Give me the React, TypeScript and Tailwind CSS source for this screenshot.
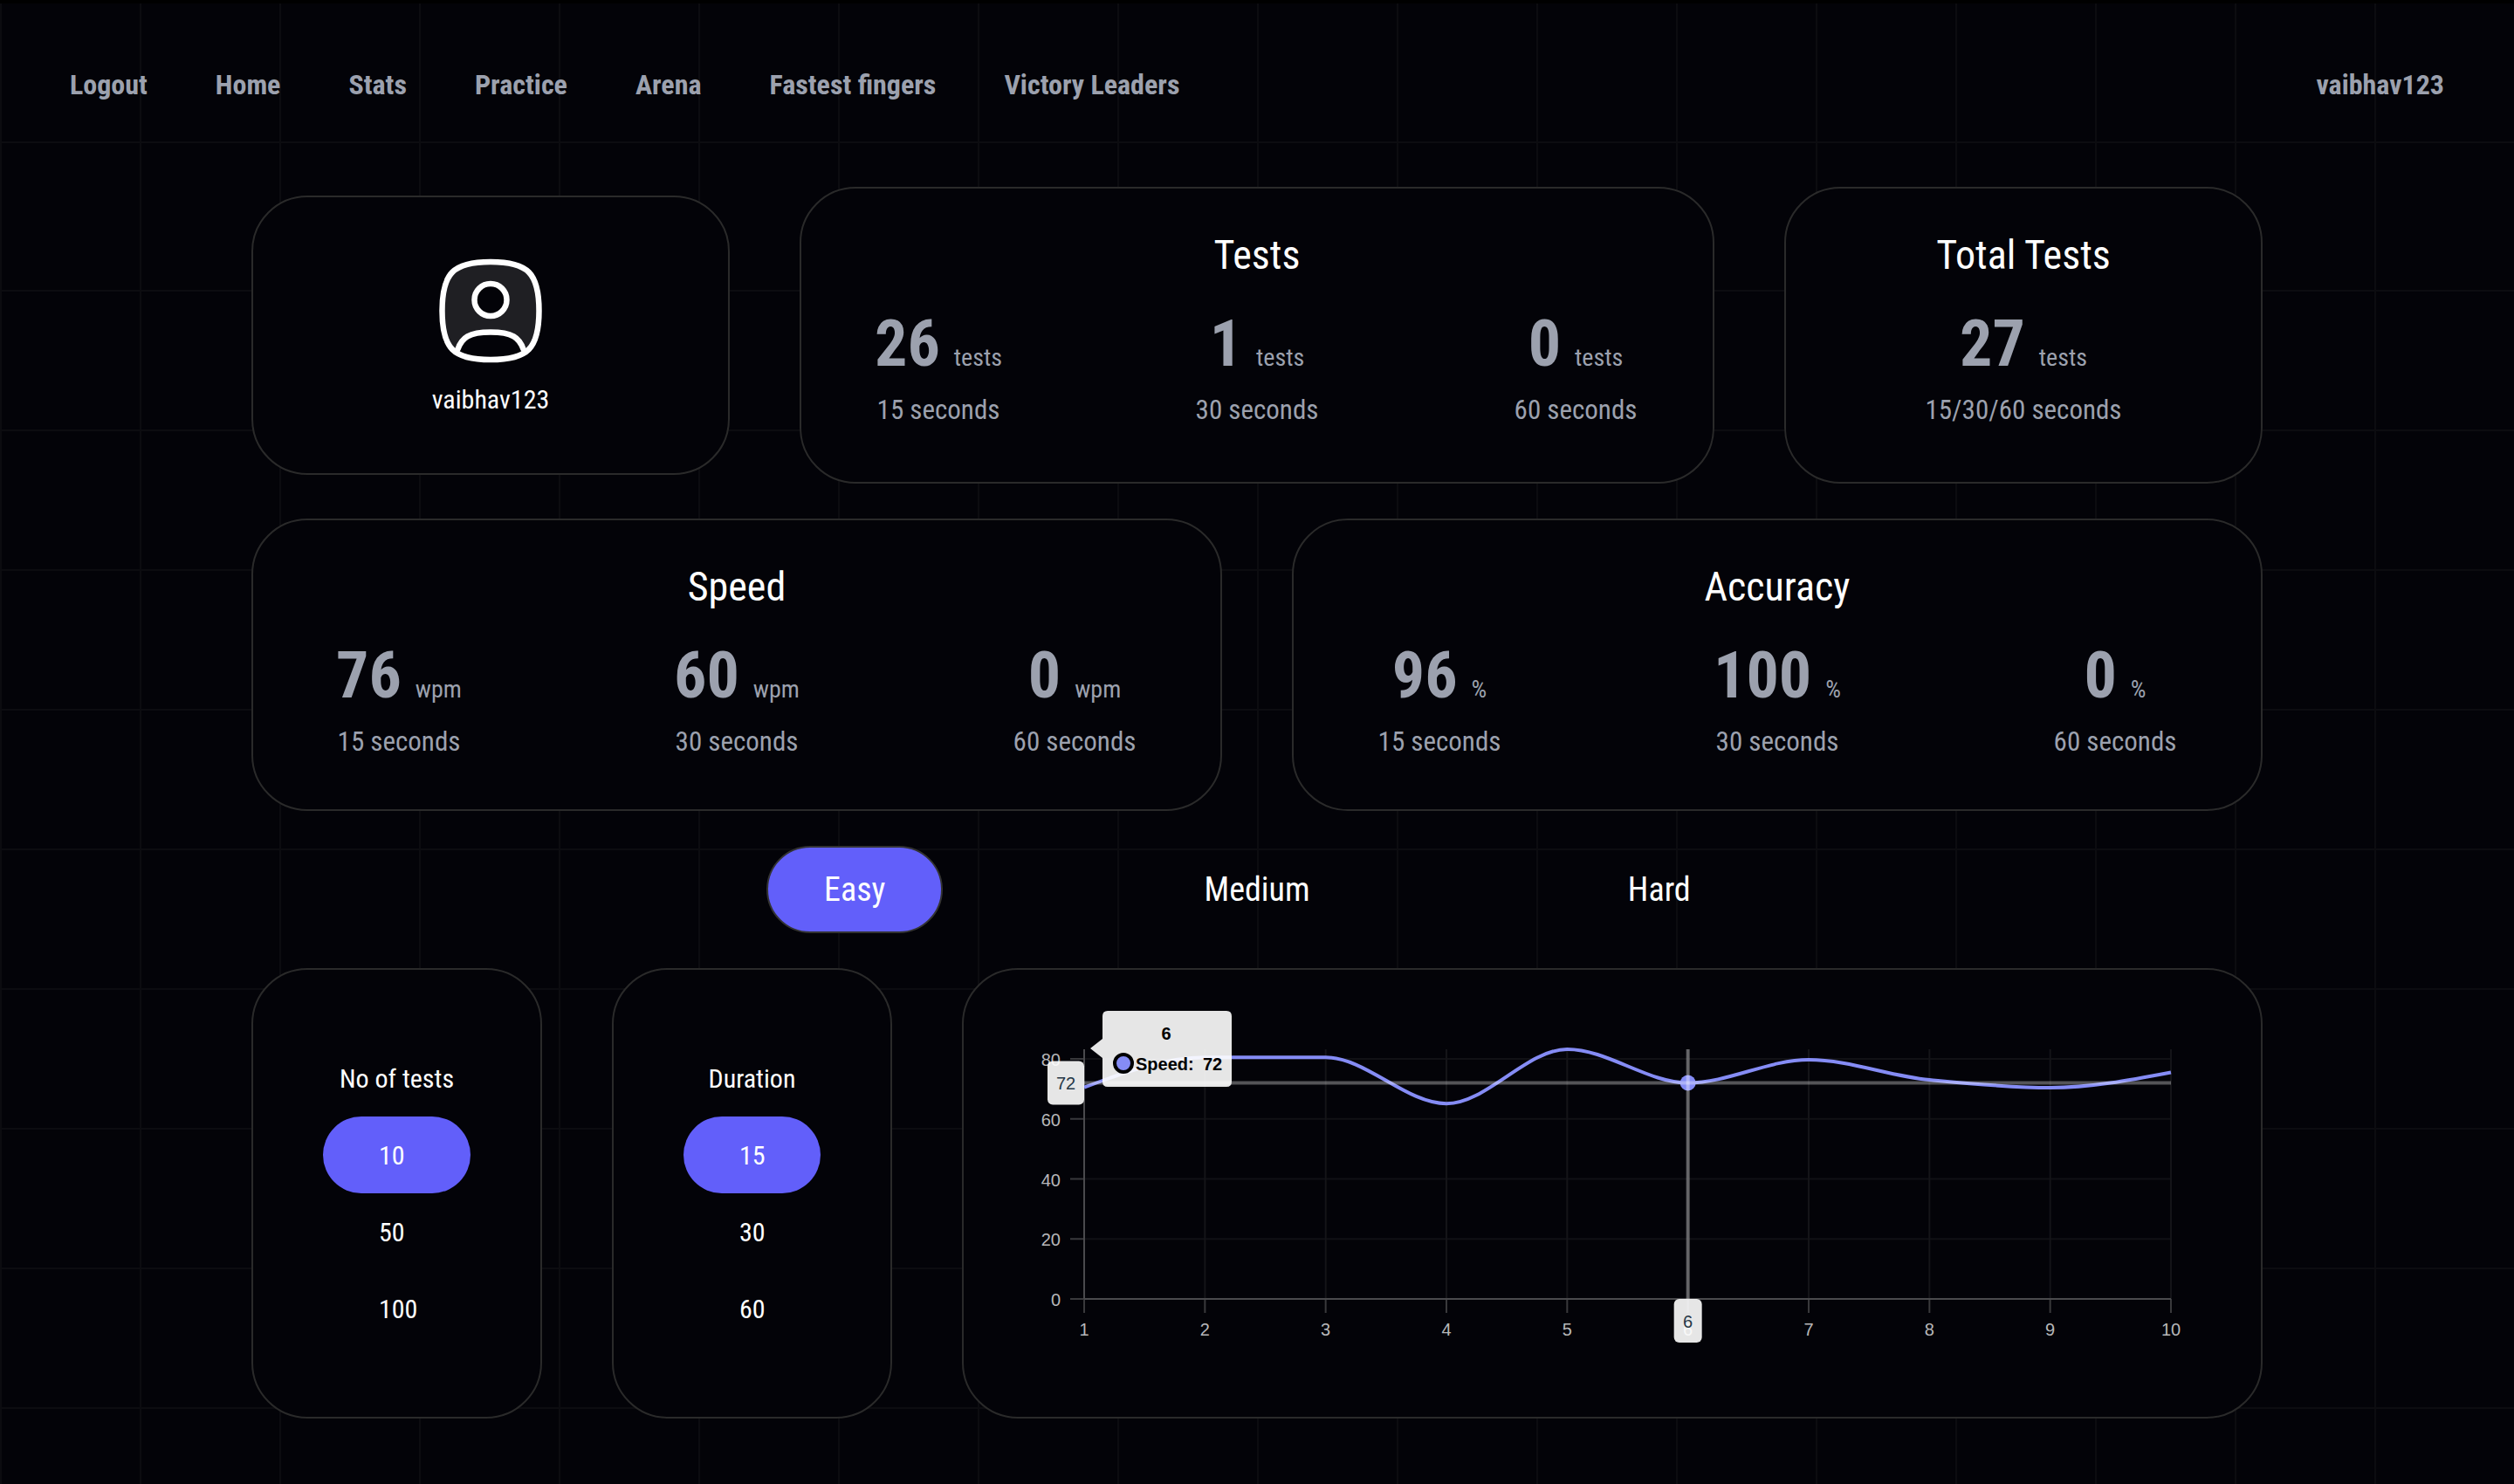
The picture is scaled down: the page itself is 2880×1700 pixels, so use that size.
import React, { useState } from "react";

const NAV = ["Logout", "Home", "Stats", "Practice", "Arena", "Fastest fingers", "Victory Leaders"];

type Stat = { value: string; unit: string; label: string };

const TESTS: Stat[] = [
  { value: "26", unit: "tests", label: "15 seconds" },
  { value: "1", unit: "tests", label: "30 seconds" },
  { value: "0", unit: "tests", label: "60 seconds" },
];
const SPEED: Stat[] = [
  { value: "76", unit: "wpm", label: "15 seconds" },
  { value: "60", unit: "wpm", label: "30 seconds" },
  { value: "0", unit: "wpm", label: "60 seconds" },
];
const ACCURACY: Stat[] = [
  { value: "96", unit: "%", label: "15 seconds" },
  { value: "100", unit: "%", label: "30 seconds" },
  { value: "0", unit: "%", label: "60 seconds" },
];

const CARD = "rounded-[64px] border-2 border-[#2a2a2a] bg-[#030308]";

function StatCell({ stat }: { stat: Stat }) {
  return (
    <div className="flex min-w-[154px] flex-col items-center whitespace-nowrap text-[#9ca1ae]">
      <div className="flex items-baseline gap-4 leading-[80px]">
        <span className="text-[74px] font-bold">{stat.value}</span>
        <span className="text-[28px]">{stat.unit}</span>
      </div>
      <div className="text-[31px] leading-[40px]">{stat.label}</div>
    </div>
  );
}

function StatCard({ title, stats, className }: { title: string; stats: Stat[]; className: string }) {
  return (
    <section className={`${CARD} pt-10 ${className}`}>
      <h2 className="text-center text-[46px] leading-[72px] text-white">{title}</h2>
      <div className={`mt-[26px] flex ${stats.length > 1 ? "justify-between" : "justify-center"}`}>
        {stats.map((s) => (
          <StatCell key={s.label} stat={s} />
        ))}
      </div>
    </section>
  );
}

function Avatar() {
  return (
    <svg viewBox="0 0 124 124" className="h-[124px] w-[124px]" fill="none" stroke="#fff" strokeWidth="6.5" strokeLinecap="round" aria-hidden="true">
      <path d="M6.5 62C6.5 19 19 6 62 6S117.500 19 117.500 62S105 118 62 118S6.500 105 6.500 62Z" fill="#1f1f23" stroke="none" />
      <path d="M24.500 106C29 93 37 86.500 62 86.500S95 93 99.500 106C90 115 80 117 62 117S34 115 24.500 106Z" fill="#030308" stroke="none" />
      <path d="M6.500 62C6.500 19 19 6 62 6S117.500 19 117.500 62S105 118 62 118S6.500 105 6.500 62Z" />
      <circle cx="62" cy="49.500" r="18.500" fill="#030308" />
      <path d="M24.500 106C29 93 37 86.500 62 86.500S95 93 99.500 106" />
    </svg>
  );
}

function OptionCard({ title, options, className }: { title: string; options: string[]; className: string }) {
  const [active, setActive] = useState(options[0]);
  return (
    <section className={`${CARD} flex flex-col p-20 text-[30px] text-white ${className}`}>
      <h3 className="flex h-[88px] items-center justify-center whitespace-nowrap">{title}</h3>
      {options.map((o) => (
        <button
          key={o}
          type="button"
          aria-pressed={o === active}
          onClick={() => setActive(o)}
          className={`flex h-[88px] items-center rounded-full px-16 ${o === active ? "bg-[#625ffa]" : ""}`}
        >
          {o}
        </button>
      ))}
    </section>
  );
}

const SPEEDS = [70.5, 80.5, 80.5, 65.1, 83.2, 72, 79.7, 73, 70.4, 75.5];
const LEFT = 138;
const RIGHT = 1383;
const TOP = 91;
const BOTTOM = 377;
const STEP = (RIGHT - LEFT) / 9;
const px = (i: number) => LEFT + STEP * i;
const py = (v: number) => BOTTOM - v * 3.4375;

/* Monotone cubic interpolation through the points */
function smoothPath(values: number[]) {
  const ys = values.map(py);
  const n = ys.length;
  const slope = ys.slice(1).map((y, i) => (y - ys[i]) / STEP);
  const tangent = ys.map((_, i) => {
    if (i === 0 || i === n - 1) return 0;
    const a = slope[i - 1];
    const b = slope[i];
    return a * b <= 0 ? 0 : (2 * a * b) / (a + b);
  });
  tangent[0] = (3 * slope[0] - tangent[1]) / 2;
  tangent[n - 1] = (3 * slope[n - 2] - tangent[n - 2]) / 2;
  let d = `M${px(0)} ${ys[0]}`;
  for (let i = 0; i < n - 1; i++) {
    const h = STEP / 3;
    d += `C${px(i) + h} ${ys[i] + tangent[i] * h} ${px(i + 1) - h} ${ys[i + 1] - tangent[i + 1] * h} ${px(i + 1)} ${ys[i + 1]}`;
  }
  return d;
}

function SpeedChart() {
  const hover = 5;
  const hx = px(hover);
  const hy = py(SPEEDS[hover]);
  return (
    <svg viewBox="0 0 1486 512" className="block w-full font-['Liberation_Sans',Arial,sans-serif] text-[20px]" role="img" aria-label="Speed per test">
      {[20, 40, 60, 80].map((v) => (
        <line key={v} x1={LEFT} x2={RIGHT} y1={py(v)} y2={py(v)} stroke="#111115" strokeWidth="2" />
      ))}
      {SPEEDS.map((_, i) => (
        <line key={i} x1={px(i)} x2={px(i)} y1={TOP} y2={BOTTOM} stroke="#141418" strokeWidth="2" />
      ))}
      {[0, 20, 40, 60, 80].map((v) => (
        <g key={v}>
          <line x1={LEFT - 16} x2={LEFT} y1={py(v)} y2={py(v)} stroke="#39393c" strokeWidth="2" />
          <text x="111" y={py(v) + 8} textAnchor="end" fill="#b7b7b9">{v}</text>
        </g>
      ))}
      {SPEEDS.map((_, i) => (
        <g key={i}>
          <line x1={px(i)} x2={px(i)} y1={BOTTOM} y2={BOTTOM + 16} stroke="#39393c" strokeWidth="2" />
          <text x={px(i)} y="419" textAnchor="middle" fill="#b7b7b9">{i + 1}</text>
        </g>
      ))}
      <line x1={LEFT} x2={LEFT} y1={TOP} y2={BOTTOM} stroke="#4a4a4d" strokeWidth="2" />
      <line x1={LEFT} x2={RIGHT} y1={BOTTOM} y2={BOTTOM} stroke="#4a4a4d" strokeWidth="2" />

      <path d={smoothPath(SPEEDS)} fill="none" stroke="#858cf5" strokeWidth="4" />
      <circle cx={hx} cy={hy} r="9" fill="#858cf5" />
      <line x1={LEFT} x2={RIGHT} y1={hy} y2={hy} stroke="#fff" strokeOpacity="0.32" strokeWidth="4" />
      <line x1={hx} x2={hx} y1={TOP} y2={BOTTOM} stroke="#fff" strokeOpacity="0.36" strokeWidth="4" />

      <rect x={LEFT - 42} y={hy - 25} width="42" height="50" rx="6" fill="#fff" fillOpacity="0.9" />
      <text x={LEFT - 21} y={hy + 7} textAnchor="middle" fill="#263846">72</text>
      <rect x={hx - 16} y={BOTTOM} width="32" height="50" rx="6" fill="#fff" fillOpacity="0.9" />
      <text x={hx} y="410" textAnchor="middle" fill="#263846">6</text>

      <path d="M165 47H301Q307 47 307 53V128Q307 134 301 134H165Q159 134 159 128V101L145 90L159 79V53Q159 47 165 47Z" fill="#fff" fillOpacity="0.9" />
      <g fill="#000" className="font-bold">
        <text x="232" y="80" textAnchor="middle">6</text>
        <text x="197" y="115">Speed:</text>
        <text x="274" y="115">72</text>
      </g>
      <circle cx="183" cy="107" r="10" fill="#858cf5" stroke="#000" strokeWidth="4" />
    </svg>
  );
}

export default function App() {
  const [level, setLevel] = useState("Easy");
  return (
    <div className="flex min-h-screen flex-col border-t-4 border-black bg-[#030308] bg-[linear-gradient(to_right,#0c0c10_2px,transparent_2px)] bg-[length:160px_100%] font-['Roboto_Condensed',Roboto,sans-serif]">
      <header className="mb-[10px] flex h-40 items-center justify-between border-b-2 border-[#0c0c10] px-20 pt-7 text-[32px] font-bold text-[#9ca1ae]">
        <nav className="flex gap-[78px]">
          {NAV.map((n) => (
            <a key={n} href="#">{n}</a>
          ))}
        </nav>
        <a href="#">vaibhav123</a>
      </header>

      <main className="flex-1 bg-[linear-gradient(to_bottom,transparent_158px,#0c0c10_158px)] bg-[length:100%_160px] pb-[75px] pt-10">
        <div className="mx-auto flex w-4/5 flex-col gap-10">
          <div className="grid grid-cols-[137fr_262fr_137fr] items-center gap-20">
            <section className={`${CARD} flex h-80 flex-col items-center pt-[68px]`}>
              <Avatar />
              <p className="mt-4 text-[30px] leading-[48px] text-white">vaibhav123</p>
            </section>
            <StatCard title="Tests" stats={TESTS} className="h-[340px] px-20" />
            <StatCard title="Total Tests" stats={[{ value: "27", unit: "tests", label: "15/30/60 seconds" }]} className="h-[340px] px-20" />
          </div>

          <div className="grid grid-cols-2 gap-20">
            <StatCard title="Speed" stats={SPEED} className="h-[335px] px-[90px]" />
            <StatCard title="Accuracy" stats={ACCURACY} className="h-[335px] px-[90px]" />
          </div>

          <div className="mx-auto grid w-3/5 grid-cols-3 justify-items-center">
            {["Easy", "Medium", "Hard"].map((l) => (
              <button
                key={l}
                type="button"
                aria-pressed={l === level}
                onClick={() => setLevel(l)}
                className={`h-[100px] rounded-full border-2 px-16 text-[38px] text-white ${l === level ? "border-[#333333] bg-[#625ffa]" : "border-transparent"}`}
              >
                {l}
              </button>
            ))}
          </div>

          <div className="flex gap-20">
            <OptionCard title="No of tests" options={["10", "50", "100"]} className="w-[333px]" />
            <OptionCard title="Duration" options={["15", "30", "60"]} className="w-[321px]" />
            <section className={`${CARD} min-w-0 flex-1`}>
              <SpeedChart />
            </section>
          </div>
        </div>
      </main>
    </div>
  );
}
